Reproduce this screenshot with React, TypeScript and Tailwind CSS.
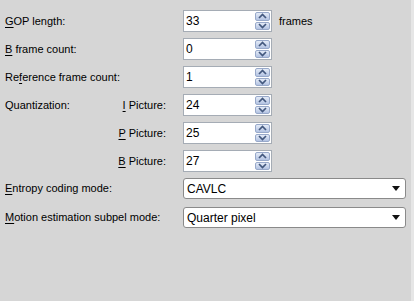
const font = { fontFamily: '"Liberation Sans", Arial, sans-serif' };

function Mn({ k }: { k: string }) {
  return <span className="underline underline-offset-2">{k}</span>;
}

function Spin({ value }: { value: string }) {
  return (
    <div className="flex h-[22px] w-[89px] items-stretch border border-[#a5acb5] bg-white">
      <div className="flex flex-1 items-center pl-[2px] text-[12px] text-black">{value}</div>
      <div className="my-[1px] mr-[1px] flex w-[15px] flex-col gap-[1px]">
        <div className="flex flex-1 items-center justify-center rounded-[2px] border border-[#98a9ca] bg-gradient-to-b from-[#e4ebf7] to-[#b3c3e2]">
          <svg width="9" height="6" viewBox="0 0 9 6">
            <path d="M1 5 L4.5 1.5 L8 5" fill="none" stroke="#43587e" strokeWidth="1.7" />
          </svg>
        </div>
        <div className="flex flex-1 items-center justify-center rounded-[2px] border border-[#98a9ca] bg-gradient-to-b from-[#e4ebf7] to-[#b3c3e2]">
          <svg width="9" height="6" viewBox="0 0 9 6">
            <path d="M1 1 L4.5 4.5 L8 1" fill="none" stroke="#43587e" strokeWidth="1.7" />
          </svg>
        </div>
      </div>
    </div>
  );
}

function Combo({ value }: { value: string }) {
  return (
    <div className="flex h-[21px] w-[223px] items-center justify-between rounded-[3px] border border-[#8a8a8a] bg-white pl-[3px] pr-[5px] text-[12px] text-black">
      <span>{value}</span>
      <svg width="8" height="5" viewBox="0 0 8 5">
        <path d="M0 0 H8 L4 5 Z" fill="#111" />
      </svg>
    </div>
  );
}

export default function App() {
  return (
    <div className="flex h-[301px] w-[414px] bg-[#d6d6d6]" style={font}>
      <div className="flex flex-1 flex-col gap-[6px] pl-[5px] pt-[10px] text-[11px] text-black">
        <div className="flex items-center">
          <div className="w-[178px]"><Mn k="G" />OP length:</div>
          <Spin value="33" />
          <span className="ml-[7px]">frames</span>
        </div>
        <div className="flex items-center">
          <div className="w-[178px]"><Mn k="B" /> frame count:</div>
          <Spin value="0" />
        </div>
        <div className="flex items-center">
          <div className="w-[178px]">Re<Mn k="f" />erence frame count:</div>
          <Spin value="1" />
        </div>
        <div className="flex items-center">
          <div className="flex w-[178px] justify-between pr-[17px]">
            <span>Quantization:</span>
            <span><Mn k="I" /> Picture:</span>
          </div>
          <Spin value="24" />
        </div>
        <div className="flex items-center">
          <div className="w-[178px] pr-[17px] text-right"><Mn k="P" /> Picture:</div>
          <Spin value="25" />
        </div>
        <div className="flex items-center">
          <div className="w-[178px] pr-[17px] text-right"><Mn k="B" /> Picture:</div>
          <Spin value="27" />
        </div>
        <div className="flex items-center">
          <div className="w-[178px]"><Mn k="E" />ntropy coding mode:</div>
          <Combo value="CAVLC" />
        </div>
        <div className="mt-[2px] flex items-center">
          <div className="w-[178px]"><Mn k="M" />otion estimation subpel mode:</div>
          <Combo value="Quarter pixel" />
        </div>
      </div>
      <div className="w-[3px] bg-[#e6e6e6]" />
    </div>
  );
}
